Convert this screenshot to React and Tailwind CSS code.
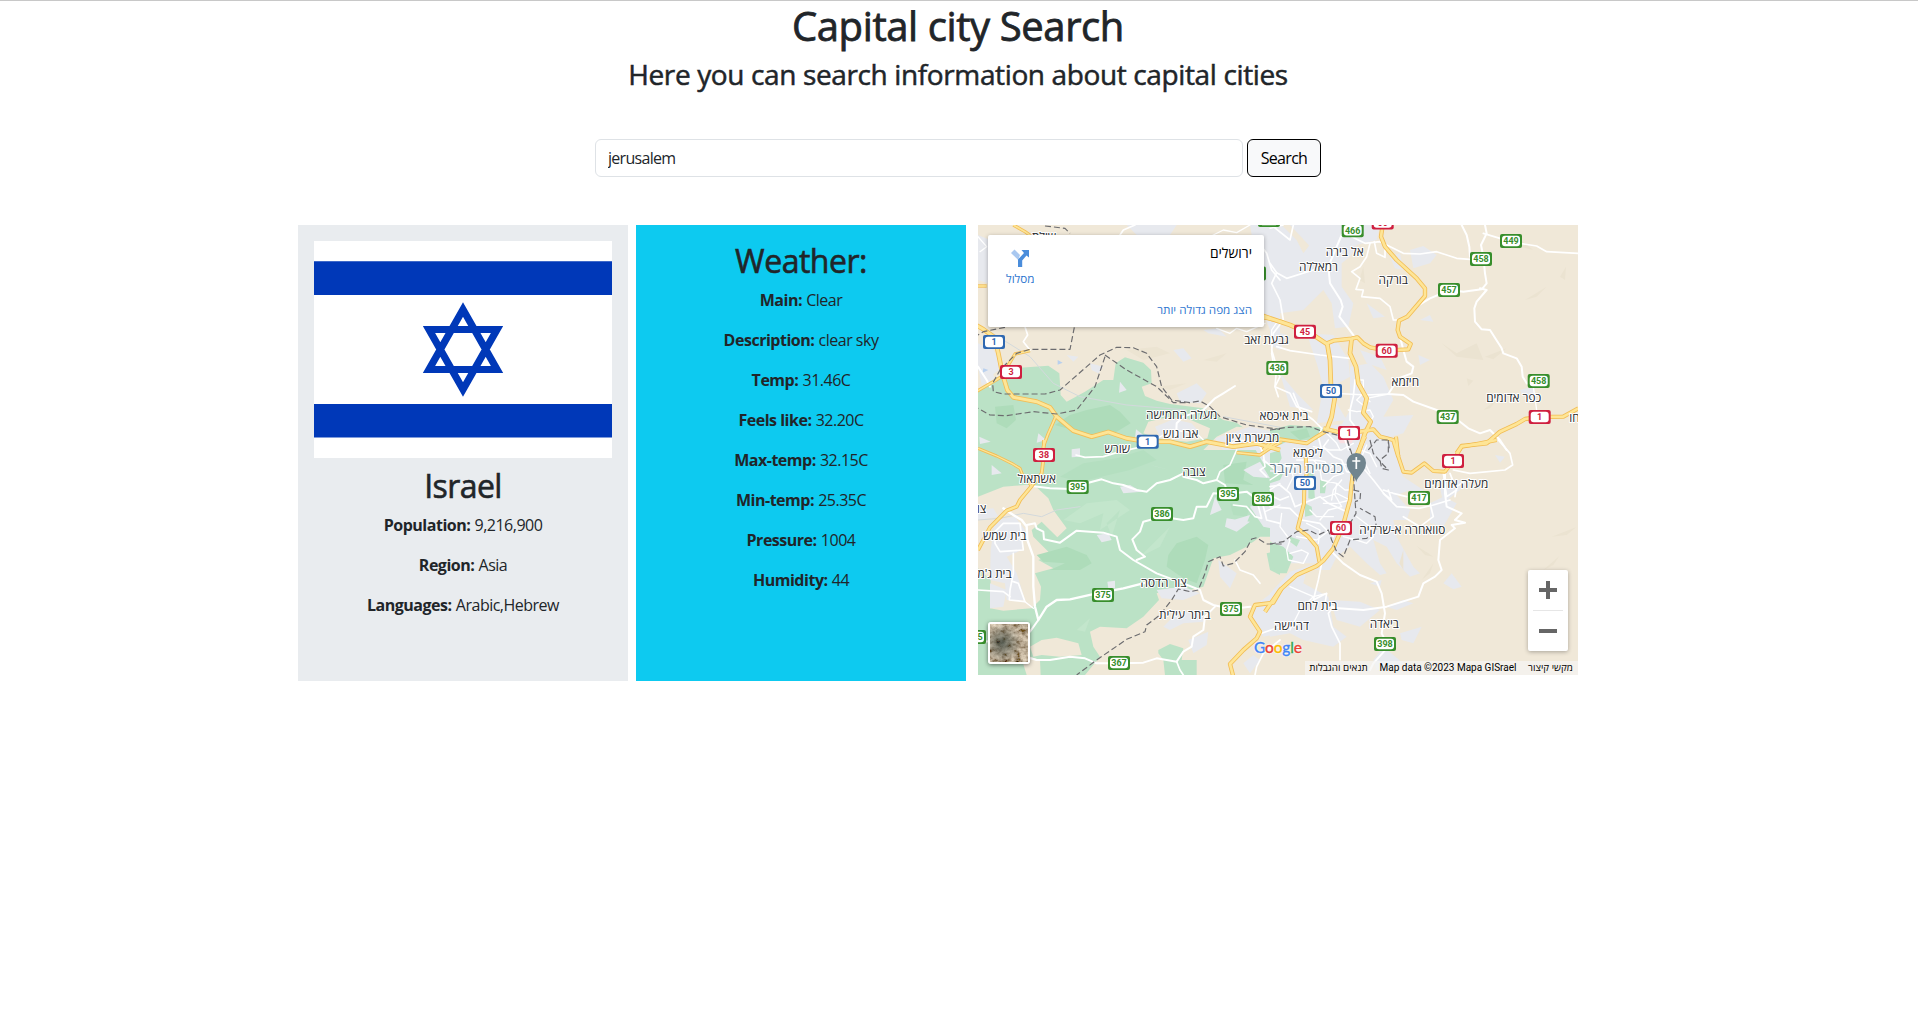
import React from "react";

const LAND = "#f0e8d8";
const URBAN = "#e7e9ee";
const GREEN = "#bbe2c6";
const DARK_GREEN = "#aedcba";

// The map is drawn as four tiles, each in its own grid of a third of a pixel.
const TILES = [
  {
    at: "translate(970 220) scale(.33333)",
    areas: [
      [URBAN, "M24 45 L60 60 L50 110 L24 130Z M470 15 L620 15 L600 45 L500 45Z M840 15 L930 15 L930 350 L900 330 L885 290Z M24 110 L54 90 L54 190 L24 180Z"],
      [GREEN, "M24 515 L60 485 L150 443 L235 437 L268 460 L272 525 L290 545 L345 515 L400 480 L430 480 L437 430 L465 412 L520 428 L543 450 L545 490 L515 500 L525 528 L560 542 L600 552 L700 565 L745 590 L760 600 L800 608 L830 630 L930 640 L930 700 L24 700Z"],
      [DARK_GREEN, "M255 615 L300 585 L350 570 L420 555 L450 575 L482 610 L440 635 L380 650 L330 640 L300 628Z M75 560 L130 555 L138 600 L110 625 L80 610Z"],
      [LAND, "M520 640 L535 605 L580 595 L650 595 L720 625 L712 655 L650 665 L560 655Z M700 690 L740 650 L800 620 L860 625 L930 610 L930 690Z"],
      [URBAN, "M555 620 L610 598 L665 610 L690 640 L640 658 L570 650Z M735 655 L840 620 L930 640 L930 690 L760 690Z M360 430 L400 440 L385 460 L365 450Z M620 520 L680 490 L710 520 L690 550 L630 545Z M610 390 L640 385 L665 415 L640 425Z M290 405 L325 410 L310 425Z M450 485 L470 510 L447 518Z M28 650 L62 665 L30 672Z M205 640 L228 660 L200 668Z M498 628 L520 645 L495 655Z M24 440 L60 430 L75 480 L35 495Z M24 370 L70 390 L100 440 L60 470 L24 450Z M700 330 L745 325 L770 350 L715 340Z"],
      ["#b9d0ee", "M263 420 L278 428 L263 434Z M40 445 L55 450 L38 458Z"],
      ["#ece4d2", "M470 390 L560 380 L600 400 L520 420Z M700 420 L770 400 L740 425Z M560 500 L650 490 L600 510Z"],
    ],
    rails: ["M60 335 L180 410 L250 490 L330 530 L470 555 L650 570", "M760 590 L840 605 L930 622"],
    white: [
      [6, "M24 440 L50 480 L60 500"], [5, "M165 320 L173 345 L160 365 L180 390"],
      [5, "M450 45 L460 30 L495 15"], [4, "M700 60 L760 30 L800 38 L840 15"],
      [6, "M795 498 L760 520 L735 535 L700 570 L640 590 L620 610 L618 650"],
      [4, "M740 325 L780 340 L800 325 L830 335 L885 310"], [5, "M930 180 L905 150 L890 100 L860 60"],
      [5, "M905 400 L912 440 L930 470 L915 500 L925 530"], [4, "M24 50 L50 80 L30 95"],
      [4, "M560 655 L610 630 L680 640 L705 665"], [4, "M925 300 L905 330 L905 400"],
      [4, "M770 680 L800 660 L850 665 L900 640"],
    ],
    roads: [
      [10, "M130 15 L165 35 L200 60"], [10, "M24 198 L50 198"],
      [14, "M10 310 L40 328 L74 352 L85 400 L97 460 L112 510 L130 532 L200 545 L240 562 L260 590 L310 632 L365 650 L415 636 L470 655 L530 665 L600 665 L660 680 L710 665 L790 680 L860 670 L930 690"],
      [10, "M10 520 L70 485 L98 468 L118 430 L135 402 L180 392"],
      [10, "M258 588 L235 640 L220 680 L220 710"], [10, "M878 293 L940 306"],
    ],
    borders: ["M105 322 L40 335 L24 345", "M313 322 L300 388 L180 388 L140 400 L90 450 L68 490 L70 515 L100 522 L225 522 L270 510 L390 405 L440 382 L490 383 L530 400 L560 440 L575 500 L605 540 L660 548 L690 543 L720 560 L750 590 L830 615 L930 628", "M405 405 L470 450 L560 500 L610 548 L660 548", "M405 410 L375 500 L320 570 L260 582 L190 575 L110 587 L60 585 L24 565", "M225 18 L285 25 L300 40"],
  },
  {
    at: "translate(1270 220) scale(.33333)",
    areas: [
      [URBAN, "M0 15 L35 15 L80 60 L100 100 L130 60 L150 15 L330 15 L320 60 L260 75 L240 110 L215 130 L215 200 L250 250 L235 320 L195 325 L185 250 L160 210 L100 270 L30 280 L0 230Z M60 15 L220 15 L205 80 L130 90Z M70 110 L200 60 L215 130 L180 205 L80 190Z"],
      [URBAN, "M420 90 L460 78 L500 105 L480 130 L430 145Z M360 110 L390 100 L400 150 L375 145Z M450 300 L480 285 L490 305Z M290 250 L345 290 L310 295Z M110 340 L190 345 L235 420 L240 470 L205 490 L200 550 L230 600 L140 610 L160 500 L140 430Z M240 440 L300 430 L340 470 L370 540 L340 590 L430 585 L400 640 L360 650 L330 690 L180 690 L200 640 L240 570Z M180 20 L245 15 L240 60 L190 70Z M0 330 L50 345 L30 390 L0 375Z M30 460 L80 520 L130 570 L60 560Z M0 670 L150 620 L240 610 L370 650 L380 690 L0 690Z M270 390 L330 410 L350 450 L290 430Z M445 405 L480 420 L450 435Z M750 510 L790 500 L800 540 L760 530Z"],
      [GREEN, "M0 630 L60 615 L150 622 L170 635 L120 675 L40 680 L0 660Z"],
      [DARK_GREEN, "M60 635 L110 625 L120 650 L90 660Z"],
      ["#ebe3d1", "M515 370 L560 400 L620 370 L640 420 L560 410Z M765 240 L830 200 L800 230Z M870 170 L888 140 L885 180Z M740 50 L790 90 L750 80Z M590 475 L610 482 L595 498Z M640 570 L690 530 L660 565Z M645 410 L710 385 L670 418Z M280 140 L285 190 L268 180Z"],
    ],
    rails: [],
    white: [
      [6, "M248 30 L215 45 L200 80 L175 140 L180 190 L212 240 L218 260 L208 290 L235 325 L255 352"],
      [5, "M0 130 L20 158 L50 175 L130 150 L185 130"], [5, "M20 158 L5 190 L30 240 L40 300 L10 340 L5 390 L20 440 L15 500 L60 520 L80 560 L125 575"],
      [5, "M70 15 L60 60 L10 20"], [5, "M245 50 L285 70 L330 65 L370 85 L400 100 L450 102 L500 95 L560 115 L600 118"],
      [5, "M300 70 L290 110 L270 140 L245 155 L270 175 L258 208 L280 210 L275 230 L330 235 L360 260 L370 300 L385 300"],
      [5, "M313 65 L320 100 L345 112 L345 90"],
      [6, "M575 15 L590 45 L598 80 L600 110"], [6, "M645 15 L650 40 L633 75 L640 110 L645 160 L650 190 L635 208 L580 215 L540 210 L480 235 L435 262"],
      [5, "M640 40 L690 55 L750 70 L800 78 L830 95 L925 100"],
      [6, "M630 205 L650 210 L620 245 L613 265 L615 305 L635 328 L660 330 L695 385 L700 400 L740 415 L755 440 L758 470 L770 490"],
      [6, "M390 350 L400 390 L410 425 L430 440 L425 460 L385 475 L355 522 L400 525 L430 545 L500 570 L570 605 L595 625 L630 640 L660 630 L690 660 L710 690"],
      [5, "M20 380 L60 392 L150 405 L240 415"], [4, "M195 520 L290 525 L355 522 L290 535 L300 545"],
      [5, "M255 480 L250 530 L240 570 L240 600 L270 640"], [4, "M255 480 L280 480 L280 520 L260 540 L285 560"],
      [4, "M790 500 L800 570"], [4, "M235 570 L260 575 L300 570 L310 590 L290 620"], [5, "M70 520 L90 570 L130 600 L155 625 L145 650 L155 690"],
      [4, "M170 640 L200 670 L210 690"], [4, "M185 630 L225 660 L235 690"],
      [4, "M0 25 L40 15"],
    ],
    roads: [
      [14, "M-20 288 L60 315 L130 345 L172 373 L180 420 L183 500 L195 530 L185 590 L170 630"],
      [13, "M172 370 L190 362 L245 356 L262 352 L280 370 L300 382 L350 392 L415 388 L422 372 L390 350 L383 330 L387 302 L412 290 L465 228 L465 205 L440 175 L380 120 L345 80 L333 50 L338 15"],
      [14, "M245 355 L240 400 L258 440 L265 490 L290 535 L280 578 L302 605 L285 640 L265 700"],
      [13, "M160 625 L200 635 L240 640 L310 628 L330 650 L370 660 L385 710"],
      [12, "M-20 690 L30 658 L110 670 L140 650 L170 632"],
      [13, "M560 700 L575 678 L650 670 L690 635 L740 612 L765 597 L809 591 L880 590 L925 565"],
    ],
    borders: ["M0 630 L50 622 L120 620 L160 635 L230 652 L240 690", "M295 690 L320 660 L355 660 L358 690"],
  },
  {
    at: "translate(970 440) scale(.33333)",
    areas: [
      [GREEN, "M24 30 L930 30 L930 290 L870 290 L830 320 L780 345 L730 355 L700 440 L650 452 L600 445 L560 460 L567 480 L520 530 L470 565 L390 560 L360 575 L370 620 L390 650 L345 705 L24 705Z"],
      [LAND, "M24 170 L100 140 L190 133 L235 175 L250 210 L290 265 L262 292 L215 245 L185 270 L190 290 L245 345 L205 360 L250 385 L195 400 L213 440 L210 480 L185 505 L100 512 L60 505 L62 420 L24 385Z M180 620 L215 600 L260 593 L325 610 L335 645 L270 650 L215 645 L190 650Z M840 310 L930 290 L930 420 L800 430Z"],
      [LAND, "M150 640 L210 660 L212 705 L170 705Z"],
      [DARK_GREEN, "M200 345 L290 320 L350 345 L365 370 L330 390 L240 390 L285 370 L220 365Z M595 345 L620 310 L680 290 L715 315 L705 360 L680 430 L640 415 L590 380Z M760 75 L830 65 L820 120 L850 135 L765 130Z"],
      ["#b4dfc0", "M270 110 L340 70 L440 55 L520 30 L560 60 L480 90 L330 125Z M780 190 L840 200 L830 230 L790 225Z"],
      ["#c3e6cc", "M280 240 L350 190 L440 180 L480 210 L390 270 L400 220 L330 250Z M520 340 L600 260 L570 320 L510 350Z M320 570 L360 535 L345 575Z M410 250 L425 290 L450 210Z"],
      [GREEN, "M565 630 L600 612 L640 625 L635 660 L680 660 L680 705 L585 705 L580 660 L565 640Z M890 340 L930 330 L930 405 L900 390Z"],
      [URBAN, "M75 240 L135 230 L165 270 L155 330 L110 350 L140 400 L165 480 L110 480 L105 430 L60 420 L62 330Z M24 210 L70 205 L85 230 L24 240Z M60 430 L110 450 L100 500 L60 505Z M305 28 L330 25 L330 50 L305 52Z M65 75 L95 100 L65 105Z M450 140 L480 135 L515 155 L460 160Z M735 170 L755 210 L720 225Z M380 285 L415 280 L425 300 L395 307Z M412 425 L435 422 L435 445 L415 445Z M770 235 L840 245 L800 275 L765 260Z M540 75 L600 90 L560 80Z M820 90 L870 65 L900 115 L850 110Z M840 200 L930 160 L930 270 L880 260Z M560 450 L640 440 L690 460 L640 480 L575 475Z M580 560 L620 520 L700 510 L700 545 L640 550 L600 570Z M745 360 L800 400 L780 445 L750 410Z M655 600 L715 575 L710 615 L670 640Z M850 500 L930 440 L930 580 L880 590 L850 550Z M820 670 L850 645 L870 660 L840 700Z M840 0 L930 0 L930 70 L880 70Z M790 240 L840 225 L830 250Z"],
    ],
    rails: ["M24 240 L90 235 L160 220 L215 230 L260 210 L330 200"],
    white: [
      [5, "M318 45 L345 52 L400 50 L450 35 L540 15"],
      [6, "M185 138 L240 145 L323 148 L350 130 L395 118 L430 130 L460 135 L500 150 L530 155 L560 130 L600 120 L640 100"],
      [6, "M640 110 L680 120 L700 130 L740 120 L765 135 L774 162 L830 155 L850 170 L879 177"],
      [5, "M740 120 L750 95 L780 75 L800 30"],
      [6, "M774 162 L730 160 L710 200 L680 200 L670 235 L640 240 L576 230 L520 245 L510 275 L487 298 L500 330 L525 350 L500 360"],
      [6, "M170 255 L195 250 L200 265 L220 275 L222 298 L270 308 L295 290 L320 272 L400 278 L440 290 L450 330 L490 360 L560 400 L640 430 L690 450 L700 480 L730 495 L783 507 L840 500"],
      [7, "M100 205 L130 225 L155 240 L170 260 L172 300 L190 350 L190 440 L195 500 L205 540 L230 500 L260 480 L300 478 L380 460 L460 445 L540 425"],
      [5, "M75 310 L90 335 L160 330 L150 250 L100 250 L75 275Z M130 340 L130 400 L120 450 L118 480 L165 485 L145 430 L130 425"],
      [5, "M24 450 L100 455 L120 470"], [6, "M205 540 L180 575 L150 590 L45 605"],
      [6, "M165 650 L200 660 L240 660 L300 650 L345 655 L380 670 L447 670 L520 668 L560 655 L620 665 L640 635 L665 620 L670 590 L700 570 L705 530 L735 500"],
      [5, "M620 665 L630 690 L640 705"], [5, "M795 360 L810 390 L850 405 L870 430"],
      [5, "M790 195 L830 200 L855 230 L875 235 L860 180"], [5, "M860 0 L880 40 L885 80 L870 90 L890 110"], [5, "M880 60 L930 100"],
      [5, "M879 195 L890 240 L930 250"], [5, "M930 600 L880 640 L860 680 L855 705"], [5, "M875 580 L930 560"],
      [4, "M165 485 L190 505"], [4, "M900 150 L930 130"], [4, "M885 215 L930 195"],
    ],
    roads: [
      [9, "M24 25 L80 48 L125 70 L150 85 L160 110 L185 138"],
      [12, "M185 138 L150 180 L140 200 L110 212 L60 262 L24 330"],
      [11, "M222 0 L220 60 L215 100 L185 138"],
      [10, "M800 38 L870 45 L900 25 L935 5"],
      [13, "M935 445 L910 488 L855 495 L840 530 L870 575 L860 595 L820 630 L780 672 L790 710"],
    ],
    borders: ["M935 312 L890 312 L860 293 L845 297 L825 335 L790 370 L760 378 L750 350 L715 365 L705 400 L685 450 L660 455 L625 447 L605 480 L570 525 L530 555 L525 575 L470 598 L380 660 L320 705"],
  },
  {
    at: "translate(1270 440) scale(.33333)",
    areas: [
      [URBAN, "M0 30 L30 0 L370 0 L375 60 L400 110 L460 150 L440 200 L420 150 L380 165 L420 210 L410 240 L370 240 L380 290 L430 380 L450 400 L420 410 L380 370 L350 320 L310 300 L330 370 L350 400 L330 405 L290 370 L240 320 L200 350 L180 390 L110 390 L100 430 L175 470 L190 560 L230 590 L190 620 L100 600 L60 580 L0 590 L0 460 L60 395 L140 370 L60 370 L0 300Z M180 480 L270 485 L330 510 L270 560 L200 540Z M350 500 L400 480 L430 490 L380 510Z M545 400 L575 440 L550 448 L520 430Z M390 580 L455 560 L430 610 L395 600Z M310 660 L340 620 L400 670 L370 690 L320 690Z M300 430 L335 420 L330 440Z M480 190 L520 170 L560 190 L520 260 L480 250Z M505 120 L600 120 L570 150 L520 190Z M675 45 L705 50 L690 68Z M290 20 L380 30 L400 90 L340 140Z M240 270 L310 280 L280 350 L220 300Z"],
      [GREEN, "M0 40 L30 30 L35 55 L15 90 L0 90Z M0 95 L40 100 L30 120 L0 130Z M0 305 L40 320 L70 350 L50 400 L20 400 L0 350Z M105 190 L125 200 L128 225 L105 230Z M115 100 L130 100 L135 180 L115 175Z M150 120 L170 125 L165 160 L150 160Z M60 290 L90 300 L80 320 L60 305Z M0 0 L60 0 L30 15 L0 20Z"],
      ["#fadfe2", "M205 0 L250 0 L245 10 L210 10Z"],
      ["#ebe3d1", "M440 318 L475 340 L490 350 L465 345Z M400 330 L400 390 L388 370Z M455 420 L490 370 L480 400Z M820 390 L868 348 L850 375Z M845 290 L918 262 L890 285Z"],
    ],
    rails: [],
    white: [
      [5, "M175 0 L160 20 L190 50 L215 60 L230 95 L260 100"], [4, "M130 20 L180 30 L215 30 L250 10"], [4, "M175 90 L200 70 L240 75"],
      [4, "M150 90 L155 120 L200 130 L225 150 L245 150 M160 140 L190 110 L220 100 M155 175 L200 160 L240 180 L200 190 L160 190 M200 130 L195 165 L215 200 L175 210 L150 240"],
      [5, "M0 140 L30 135 L60 160 L75 200 L100 190 L150 170 L175 190 L230 215 M0 165 L30 180 L55 170 M0 200 L60 205 L95 240 L150 250 L190 290"],
      [4, "M15 70 L60 80 L70 110 L50 150 M30 100 L0 120 M35 220 L30 260 L60 300 L50 330 L55 360 L100 370 L115 340 L95 330 L60 340 M80 290 L140 300 L180 270"],
      [4, "M120 210 L140 230 L190 230 M215 120 L190 150 L185 180 M135 60 L165 65 L180 90 M80 60 L130 60 L150 80 M110 250 L150 270 L145 310"],
      [5, "M285 90 L310 120 L345 165 L380 200 L447 205 L490 195 L540 180"], [6, "M525 100 L525 160 L530 200 L575 220 L555 240 L585 248 L545 255 L555 265 L510 300 L505 360 L515 390 L495 410 L460 430 L445 470 L350 500 L280 510 L185 503"],
      [5, "M540 100 L560 150 L530 170 L520 100 M590 120 L560 140 L555 170"], [5, "M340 150 L370 160 L410 170 M355 150 L365 180 L340 160 M480 190 L490 230 L450 260 L400 230"],
      [6, "M185 335 L220 370 L270 405 L320 425 L335 460 L345 520 L335 580 L355 620 L310 670 L300 690"],
      [5, "M155 370 L145 420 L130 480 L170 460 L165 490 L190 500 L175 520 L185 560 L210 610 L210 660"], [4, "M60 440 L130 470 L170 460 M130 470 L90 510 L60 570"],
      [5, "M685 0 L720 40 L728 75 L705 90 L600 100 L550 90"], [4, "M220 290 L260 300 L290 310 L310 290 L300 260 L260 230"],
      [4, "M270 30 L300 40 L320 80 M290 15 L275 50 L300 100"],
    ],
    roads: [
      [13, "M-15 515 L30 450 L80 405 L140 378 L160 362 L190 325 L218 260 L240 180 L245 130 L250 95 L262 40 L285 -10"],
      [12, "M107 50 L110 100 L103 140 L102 190 L83 265 L115 290 L140 320 L148 365"],
      [12, "M378 -10 L385 50 L400 95 L425 98 L463 70 L490 93 L525 95 L549 63 L575 20 L620 12 L680 0"],
      [11, "M-20 30 L10 -5"],
    ],
    borders: ["M0 312 L40 305 L80 275 L115 270 L145 285 L175 270 L185 300 L200 335 L220 350 L240 300 L290 295 L320 270 L315 230 L270 205", "M232 0 L245 40 L250 100 L255 180 L258 220 L240 250", "M300 0 L310 40 L340 75 L355 90 L335 85 L330 60 L355 40 L355 0", "M250 150 L272 155 L270 180 L255 185"],
  },
];

const PLACES = [
  [1044, 237, "שילת"], [1266.5, 339.5, "גבעת זאב"], [1181.7, 414.5, "מעלה החמישה"], [1180.7, 433.5, "אבו גוש"],
  [1252.5, 437.5, "מבשרת ציון"], [1284, 415.5, "בית איכסא"], [1117.3, 448.5, "שורש"], [1344.7, 251.5, "אל בירה"],
  [1318.5, 266.5, "רמאללה"], [1393.3, 280, "בורקה"], [1405.3, 381.5, "חיזמא"], [1513.7, 397.5, "כפר אדומים"],
  [1574.5, 418, "חו"], [1036.7, 478.5, "אשתאול"], [1194, 471.5, "צובה"], [981.5, 508.5, "צו"], [1004.7, 535.5, "בית שמש"],
  [994.5, 573.5, "בית ג'מ"], [1163.7, 582.5, "צור הדסה"], [1184.7, 614.5, "ביתר עילית"], [1308, 452.5, "ליפתא"],
  [1456.3, 483.5, "מעלה אדומים"], [1402.3, 529.5, "סוואחרה א-שרקיה"], [1317.5, 606, "בית לחם"],
  [1291.5, 626, "דהיישה"], [1384.3, 623.5, "ביאדה"],
];

const G = "#388e2c";
const R = "#cf1f3f";
const B = "#2f68b1";
const SHIELDS = [
  [994, 342, "1", B], [1011, 372, "3", R], [1277.3, 368, "436", G], [1147.7, 441.7, "1", B], [1255, 273.5, "443", G],
  [1269, 220, "463", G], [1352.7, 230.3, "466", G], [1382.7, 222.5, "60", R], [1511, 241, "449", G], [1481, 259, "458", G],
  [1449, 290, "457", G], [1305, 331.7, "45", R], [1386.7, 350.7, "60", R], [1331, 391, "50", B], [1538.7, 381, "458", G],
  [1447.7, 417, "437", G], [1539.7, 417, "1", R], [1349, 433, "1", R], [1044, 455, "38", R], [1077.7, 487, "395", G],
  [1228, 494, "395", G], [1162, 514, "386", G], [1263, 499, "386", G], [1103, 595, "375", G], [1231, 609, "375", G],
  [1119, 663, "367", G], [975, 637, "385", G], [1453, 461, "1", R], [1419, 498, "417", G], [1305, 483, "50", B],
  [1341, 528, "60", R], [1385, 644, "398", G],
];

function MapDrawing() {
  return (
    <svg viewBox="978 225 600 450" className="block h-[450px] w-[600px]">
      <rect x="978" y="225" width="600" height="450" fill={LAND} />
      {TILES.map((t) => (
        <g key={t.at} transform={t.at}>
          {t.areas.map(([fill, d], i) => <path key={i} d={d} fill={fill} />)}
        </g>
      ))}
      {TILES.map((t) => (
        <g key={t.at} transform={t.at} fill="none" strokeLinejoin="round" strokeLinecap="round">
          {t.rails.map((d) => <path key={d} d={d} stroke="#d3d9dc" strokeWidth="3" />)}
          {t.white.map(([w, d]) => <path key={d} d={d} stroke="#fff" strokeWidth={w} />)}
        </g>
      ))}
      {TILES.map((t) => (
        <g key={t.at} transform={t.at} fill="none" stroke="#f2bd55" strokeLinejoin="round">
          {t.roads.map(([w, d]) => <path key={d} d={d} strokeWidth={w} />)}
        </g>
      ))}
      {TILES.map((t) => (
        <g key={t.at} transform={t.at} fill="none" strokeLinejoin="round">
          {t.roads.map(([w, d]) => <path key={d} d={d} stroke="#fee596" strokeWidth={w - 5} />)}
          {t.borders.map((d) => <path key={d} d={d} stroke="#6c6c6f" strokeWidth="3.5" strokeDasharray="18 9" />)}
        </g>
      ))}
      {SHIELDS.map(([x, y, n, c]) => (
        <g key={`${x}-${y}`}>
          <rect x={x - 11} y={y - 7} width="22" height="14" rx="2" fill={c} />
          <rect x={x - 9} y={y - 5.2} width="18" height="10.4" rx="3" fill="#fff" />
          <text x={x} y={y + 3.3} textAnchor="middle" fill={c} className="font-[Roboto] text-[9px] font-bold">{n}</text>
        </g>
      ))}
      {PLACES.map(([x, y, name]) => (
        <text key={name} x={x} y={y + 4} textAnchor="middle" fill="#26282b" stroke="#fff" strokeWidth="2" strokeLinejoin="round" paintOrder="stroke" className="font-['Open_Sans','Liberation_Sans',sans-serif] text-[11.8px]">{name}</text>
      ))}
      <text x="1306.5" y="473" textAnchor="middle" fill="#647c8b" stroke="#fff" strokeWidth="2" paintOrder="stroke" className="font-['Open_Sans','Liberation_Sans',sans-serif] text-[14.3px]">כנסיית הקבר</text>
      <path d="M1356.3 482 C1355 476 1346.6 472 1346.6 462.8 A9.7 9.7 0 0 1 1366 462.8 C1366 472 1357.6 476 1356.3 482Z" fill="#71858f" />
      <path d="M1356.3 457 V469 M1352.3 461 H1360.3" stroke="#fff" strokeWidth="1.7" />
    </svg>
  );
}

function PlaceCard() {
  return (
    <div dir="rtl" className="absolute left-[10px] top-[10px] flex h-[92px] w-[276px] justify-between rounded-[2px] bg-white pr-3 pl-[18px] font-['Open_Sans','Liberation_Sans',sans-serif] shadow-[0_1px_4px_rgba(0,0,0,0.3)]">
      <div className="flex flex-col justify-between pt-[9px] pb-[10px]">
        <div className="text-[13.8px] leading-[18px] text-black">ירושלים</div>
        <div className="text-[11.7px] leading-4 text-[#3077d0]">הצג מפה גדולה יותר</div>
      </div>
      <div className="flex flex-col items-center pt-[13px]">
        <svg viewBox="0 0 20 20" className="h-5 w-5">
          <path d="M1 5 L4.5 1.5 L10 7 L8.2 12Z" fill="#a9c8f0" />
          <path d="M8 19 V11.5 L14 5 L11.5 2 H19 V9.500 L16.500 7.500 L12.200 12.500 V19Z" fill="#4a8ddb" />
        </svg>
        <div className="mt-[2px] text-[11.7px] leading-4 text-[#3077d0]">מסלול</div>
      </div>
    </div>
  );
}

function GoogleLogo() {
  return (
    <div className="absolute left-[276px] top-[412px] flex font-[Lato] text-[15.5px] leading-5 font-medium tracking-[-0.2px] [-webkit-text-stroke:0.3px_currentColor] [text-shadow:0_0_2px_#fff,0_0_2px_#fff]">
      <span className="text-[#4285f4]">G</span><span className="text-[#ea4335]">o</span><span className="text-[#fbbc04]">o</span>
      <span className="text-[#4285f4]">g</span><span className="text-[#34a853]">l</span><span className="text-[#ea4335]">e</span>
    </div>
  );
}

function MapPanel() {
  return (
    <div className="relative h-[450px] w-[600px] overflow-hidden">
      <MapDrawing />
      <PlaceCard />
      <div className="absolute left-[10px] top-[397px] h-[42px] w-[42px] rounded-[3px] border-2 border-white shadow-[0_1px_4px_rgba(0,0,0,0.5)]">
        <svg viewBox="0 0 38 38" className="block h-[38px] w-[38px]">
          <defs>
            <filter id="terrain" x="0" y="0" width="1" height="1">
              <feTurbulence type="fractalNoise" baseFrequency="0.16 0.2" numOctaves="4" seed="8" />
              <feColorMatrix values="1.3 0 0 0 -0.18  1.25 0 0 0 -0.22  1.1 0 0 0 -0.24  0 0 0 0 1" />
            </filter>
            <radialGradient id="town" cx=".32" cy=".5" r=".5">
              <stop offset="0" stopColor="#2f3d38" stopOpacity=".7" /><stop offset="1" stopColor="#35443f" stopOpacity="0" />
            </radialGradient>
          </defs>
          <rect width="38" height="38" filter="url(#terrain)" />
          <rect width="38" height="38" fill="#c9ab87" opacity=".2" />
          <rect width="38" height="38" fill="url(#town)" />
        </svg>
      </div>
      <GoogleLogo />
      <div className="absolute left-[550px] top-[345px] flex h-[81px] w-10 flex-col items-center rounded-[2px] bg-white shadow-[0_1px_4px_rgba(0,0,0,0.3)]">
        <svg viewBox="0 0 40 40" className="h-10 w-10"><path d="M11 20 H29 M20 11 V29" stroke="#666" strokeWidth="4" /></svg>
        <div className="h-px w-[30px] bg-[#e6e6e6]" />
        <svg viewBox="0 0 40 40" className="h-10 w-10"><path d="M11 20 H29" stroke="#666" strokeWidth="4" /></svg>
      </div>
      <div className="absolute left-[327px] top-[436px] flex h-[14px] w-[273px] items-center bg-[#f5f5f5]/70 text-[9.8px] leading-[14px] whitespace-nowrap text-black">
        <span className="w-[67px] text-center font-['Open_Sans','Liberation_Sans',sans-serif]">תנאים והגבלות</span>
        <span className="w-[152px] text-center font-[Roboto] text-[10px]">Map data ©2023 Mapa GISrael</span>
        <span className="w-[53px] text-center font-['Open_Sans','Liberation_Sans',sans-serif]">מקשי קיצור</span>
      </div>
    </div>
  );
}

function Field({ label, value }) {
  return (
    <p className="mb-4 leading-6 whitespace-nowrap">
      <b className="font-bold tracking-[-0.48px]">{label}:</b> <span className="tracking-[-0.5px]">{value}</span>
    </p>
  );
}

function Flag() {
  return (
    <svg viewBox="0 0 298 217" className="mb-2 block h-[217px] w-[298px]">
      <rect width="298" height="217" fill="#fff" />
      <path d="M0 20.200 H298 V54 H0Z M0 163 H298 V196.500 H0Z" fill="#0038b8" />
      <path d="M149 68.500 L183 128.500 H115Z M149 148.500 L183 88.500 H115Z" fill="none" stroke="#0038b8" strokeWidth="7.200" />
    </svg>
  );
}

const WEATHER = [
  ["Main", "Clear"], ["Description", "clear sky"], ["Temp", "31.46C"], ["Feels like", "32.20C"],
  ["Max-temp", "32.15C"], ["Min-temp", "25.35C"], ["Pressure", "1004"], ["Humidity", "44"],
];

export default function App() {
  return (
    <div className="min-h-screen bg-white font-['Open_Sans',sans-serif] text-base text-[#212529]">
      <div className="-mb-px h-px bg-[#c8c8c8]" />
      <header className="pt-[2px] pr-[2px] text-center font-medium">
        <h1 className="mb-[7px] text-[40px] leading-[48px] tracking-[-0.4px] [-webkit-text-stroke:0.8px_currentColor]">Capital city Search</h1>
        <h3 className="mb-[48px] text-[28px] leading-[34px] tracking-[-0.37px] [-webkit-text-stroke:0.5px_currentColor]">Here you can search information about capital cities</h3>
      </header>
      <form className="ml-[595px] flex gap-1" onSubmit={(e) => e.preventDefault()}>
        <input defaultValue="jerusalem" className="h-[38px] w-[648px] rounded-md border border-[#dee2e6] px-3 text-base tracking-[-0.7px] outline-none" />
        <button className="h-[38px] w-[74px] rounded-md border border-black bg-[#f8f9fa] text-base tracking-[-0.7px] text-black">Search</button>
      </form>
      <main className="mt-12 ml-[298px] flex items-start">
        <section className="mr-2 h-[456px] w-[330px] bg-[#e9ecef] p-4 text-center">
          <Flag />
          <h2 className="mb-2 pt-px text-[32px] leading-[38px] font-medium tracking-[-0.6px] [-webkit-text-stroke:0.6px_currentColor]">Israel</h2>
          <Field label="Population" value="9,216,900" />
          <Field label="Region" value="Asia" />
          <Field label="Languages" value="Arabic,Hebrew" />
        </section>
        <section className="mr-3 h-[456px] w-[330px] bg-[#0dcaf0] p-4 text-center">
          <h2 className="mb-2 pt-px text-[32px] leading-[38px] font-medium tracking-[-0.5px] [-webkit-text-stroke:0.6px_currentColor]">Weather:</h2>
          {WEATHER.map(([label, value]) => <Field key={label} label={label} value={value} />)}
        </section>
        <MapPanel />
      </main>
    </div>
  );
}
